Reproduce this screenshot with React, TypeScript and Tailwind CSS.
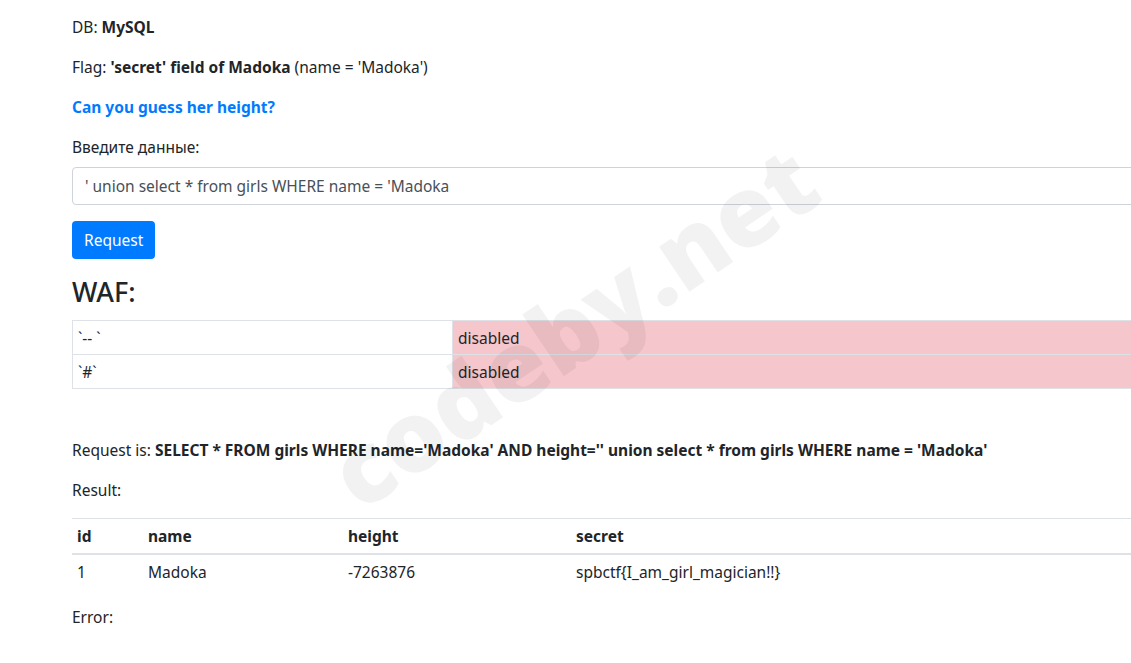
export default function App() {
  return (
    <div className="relative h-[663px] w-[1131px] overflow-hidden bg-white font-['Noto_Sans',sans-serif] text-[15.5px] leading-6 text-[#212529]">
      <div className="ml-[72px] w-[1110px] pt-[15px]">
        <p className="mb-4">
          DB: <b>MySQL</b>
        </p>
        <p className="mb-4">
          Flag: <b>'secret' field of Madoka</b> (name = 'Madoka')
        </p>
        <p className="mb-4">
          <b className="text-[#007bff]">Can you guess her height?</b>
        </p>
        <p className="mb-2">Введите данные:</p>
        <input
          type="text"
          readOnly
          value="' union select * from girls WHERE name = 'Madoka"
          className="block h-[38px] w-full rounded border border-[#ced4da] px-3 text-[#495057] outline-none"
        />
        <button
          type="button"
          className="mt-4 block h-[38px] rounded bg-[#007bff] px-3 text-white"
        >
          Request
        </button>
        <h3 className="mt-4 mb-[11px] text-[27px] leading-[34px] font-medium">WAF:</h3>
        <table className="w-full border-collapse border border-[#dee2e6]">
          <tbody>
            {["`-- `", "`#`"].map((r) => (
              <tr key={r}>
                <td className="w-[380px] border border-[#dee2e6] px-[5px] py-[4.5px]">{r}</td>
                <td className="border border-[#dee2e6] bg-[#f5c6cb] px-[5px] py-[4.5px]">disabled</td>
              </tr>
            ))}
          </tbody>
        </table>
        <p className="mt-[49px] mb-4">
          Request is: <b>SELECT * FROM girls WHERE name='Madoka' AND height='' union select * from girls WHERE name = 'Madoka'</b>
        </p>
        <p className="mb-4">Result:</p>
        <table className="w-full border-collapse text-left">
          <thead>
            <tr className="border-t border-b-2 border-[#dee2e6]">
              <th className="w-[71px] px-[5px] py-[5px]">id</th>
              <th className="w-[200px] px-[5px] py-[5px]">name</th>
              <th className="w-[228px] px-[5px] py-[5px]">height</th>
              <th className="px-[5px] py-[5px]">secret</th>
            </tr>
          </thead>
          <tbody>
            <tr>
              <td className="px-[5px] py-[5px]">1</td>
              <td className="px-[5px] py-[5px]">Madoka</td>
              <td className="px-[5px] py-[5px]">-7263876</td>
              <td className="px-[5px] py-[5px]">{"spbctf{I_am_girl_magician!!}"}</td>
            </tr>
          </tbody>
        </table>
        <p className="mt-4">Error:</p>
      </div>
      <div className="pointer-events-none absolute top-[325px] left-[572px] -translate-x-1/2 -translate-y-1/2 -rotate-[34deg] font-['Open_Sans',sans-serif] text-[98px] leading-none font-extrabold whitespace-nowrap text-black/5">
        codeby.net
      </div>
    </div>
  );
}
